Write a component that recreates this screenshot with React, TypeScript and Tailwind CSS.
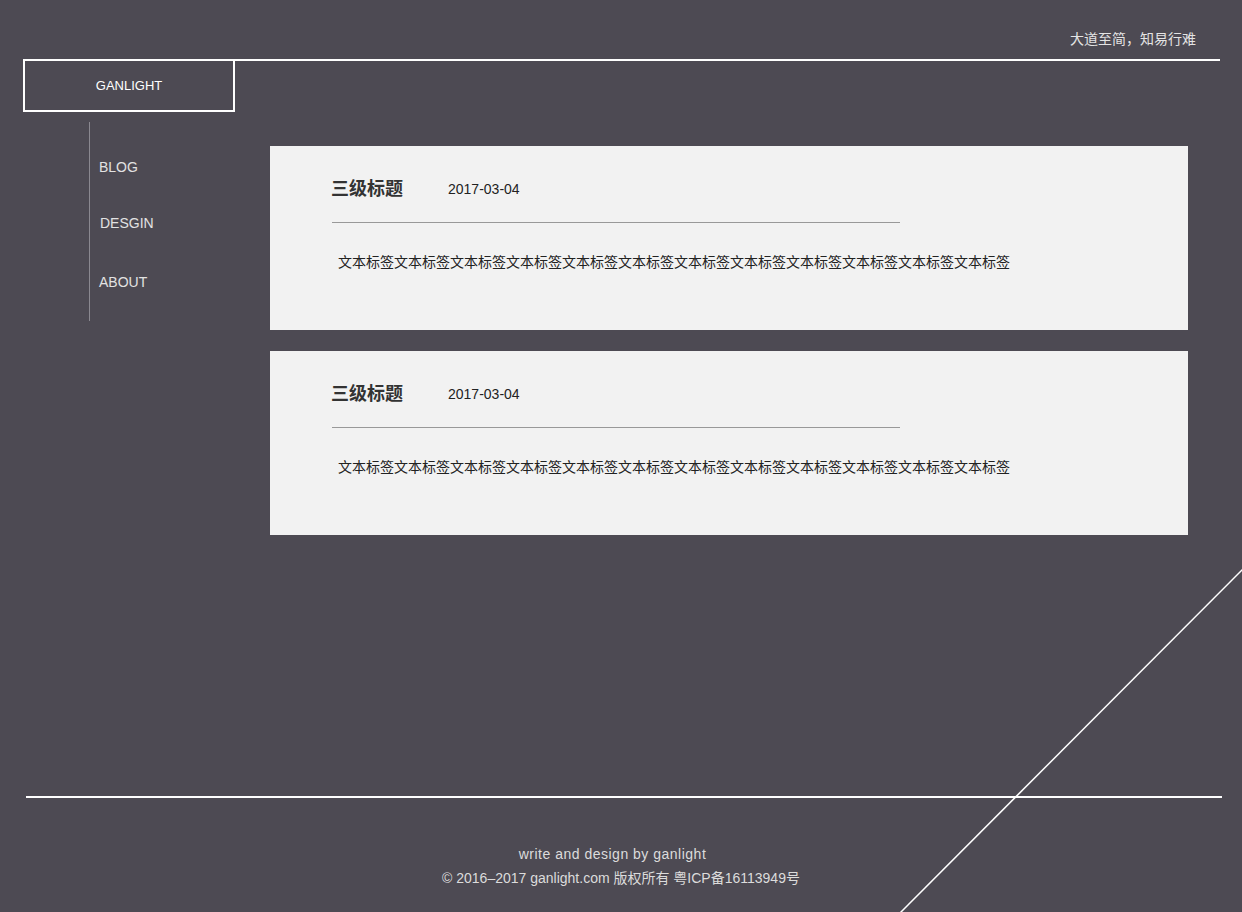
const posts = [
  { title: "三级标题", date: "2017-03-04", body: "文本标签".repeat(12) },
  { title: "三级标题", date: "2017-03-04", body: "文本标签".repeat(12) },
];

const nav = [
  { label: "BLOG", className: "mt-[35px] pl-[9px]" },
  { label: "DESGIN", className: "mt-[36px] pl-[10px]" },
  { label: "ABOUT", className: "mt-[39px] pl-[9px]" },
];

export default function App() {
  return (
    <div
      className="relative flex h-[912px] w-full flex-col overflow-hidden bg-[#4d4a53] text-[14px]"
      style={{ fontFamily: '"Liberation Sans", "Noto Sans CJK SC", sans-serif' }}
    >
      {/* Header */}
      <div className="flex h-[59px] items-end justify-end pb-[10px] pr-[46px]">
        <span className="leading-[20px] text-[#e4e4e4]">大道至简，知易行难</span>
      </div>

      <div className="flex h-[53px]">
        <div className="ml-[23px] flex w-[212px] items-center justify-center border-2 border-white">
          <span className="text-[13px] text-white">GANLIGHT</span>
        </div>
        <div className="mr-[22px] flex-1 border-t-2 border-white" />
      </div>

      {/* Main */}
      <div className="flex flex-1 items-start pl-[89px]">
        <nav className="mt-[10px] flex h-[199px] w-[181px] flex-col border-l border-[#8a8890]">
          {nav.map((item) => (
            <a key={item.label} className={`${item.className} leading-[20px] text-[#e2e2e2]`}>
              {item.label}
            </a>
          ))}
        </nav>

        <div className="flex w-[918px] flex-col gap-[21px] pt-[34px]">
          {posts.map((post, i) => (
            <article key={i} className="h-[184px] bg-[#f2f2f2] pl-[61px] pt-[30px] text-[#333]">
              <div className="flex items-center">
                <h3 className="text-[18px] font-bold leading-[26px] text-[#333]">{post.title}</h3>
                <span className="ml-[45px] leading-[20px] text-[#222]">{post.date}</span>
              </div>
              <div className="ml-[1px] mt-[20px] w-[568px] border-t border-[#999]" />
              <p className="ml-[7px] mt-[29px] leading-[20px] text-[#222]">{post.body}</p>
            </article>
          ))}
        </div>
      </div>

      {/* Footer */}
      <div className="ml-[26px] mr-[20px] border-t-2 border-white" />
      <footer className="flex h-[114px] flex-col items-center pt-[44px] text-[#dcdcdc]">
        <p className="pr-[17px] leading-[24px] tracking-[0.5px]">write and design by ganlight</p>
        <p className="leading-[24px]">© 2016–2017 ganlight.com 版权所有 粤ICP备16113949号</p>
      </footer>

      {/* Diagonal decoration */}
      <svg
        className="pointer-events-none absolute inset-0 h-full w-full"
        viewBox="0 0 1242 912"
        preserveAspectRatio="none"
      >
        <line x1="1243" y1="569" x2="900" y2="913" stroke="#fff" strokeWidth="1.5" />
      </svg>
    </div>
  );
}
